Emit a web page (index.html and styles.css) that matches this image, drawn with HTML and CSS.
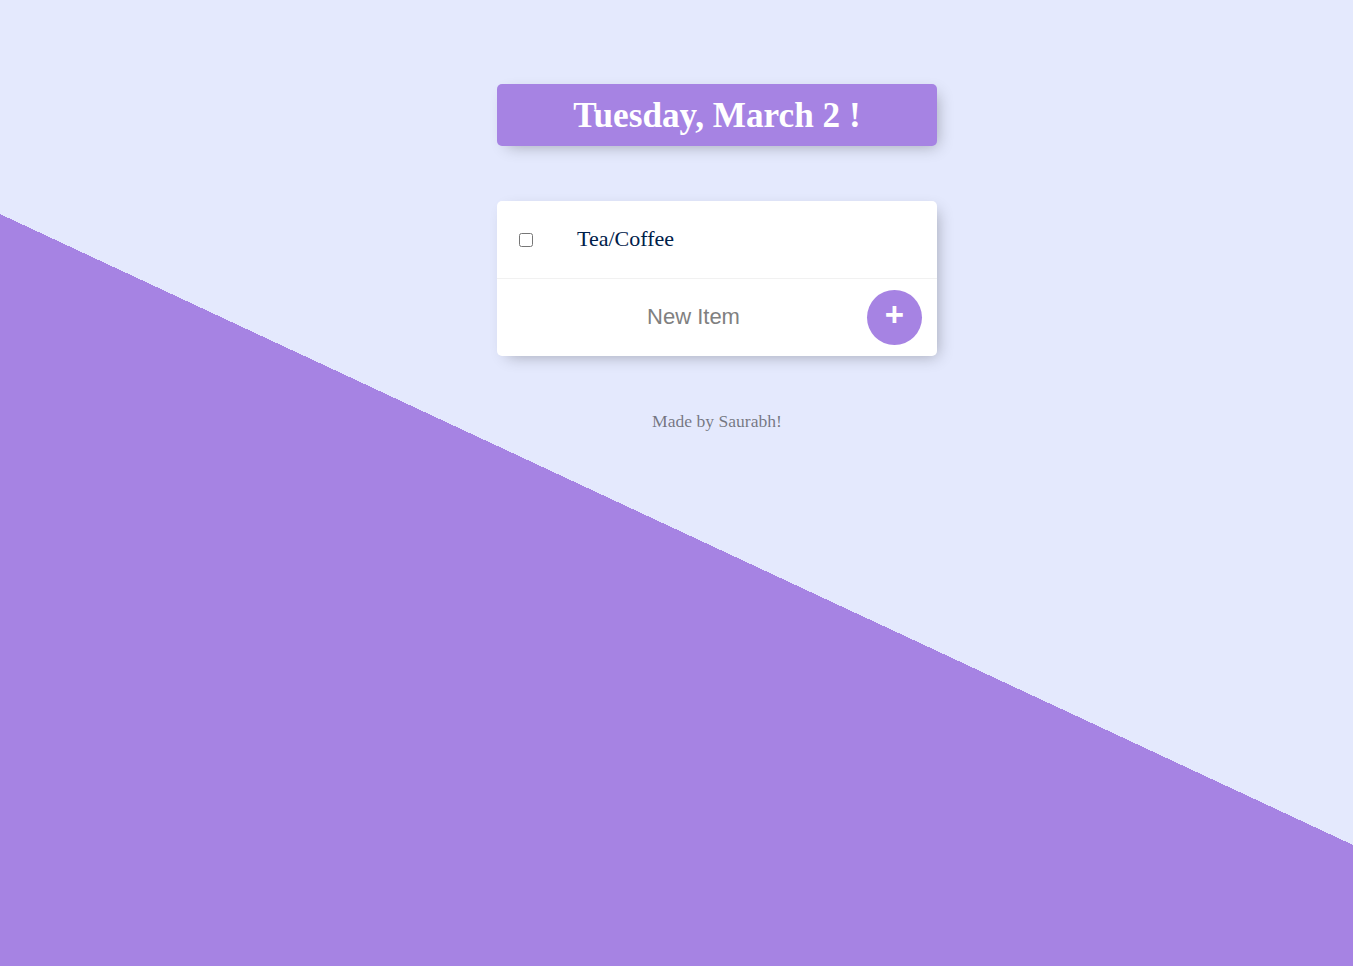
FILE: index.html
```html
<!DOCTYPE html>
<html lang="en">
<head>
<meta charset="utf-8">
<title>To-Do List</title>
<link rel="stylesheet" href="styles.css">
</head>
<body>
<div class="page">
  <div class="heading"><h1>Tuesday, March 2 !</h1></div>
  <div class="list">
    <div class="item">
      <input type="checkbox" class="check">
      <p class="item-text">Tea/Coffee</p>
    </div>
    <form class="item add-row">
      <input type="text" class="new-item" placeholder="New Item" autocomplete="off">
      <button type="button" class="add-btn">+</button>
    </form>
  </div>
  <footer class="footer">Made by Saurabh!</footer>
</div>
</body>
</html>
```
FILE: styles.css
```css
html {
  height: 100%;
  background-color: #E4E9FD;
  background-image: linear-gradient(25deg, #A683E3 50%, #E4E9FD 50%);
  background-size: 100% 1059px;
  background-repeat: no-repeat;
}
body {
  margin: 0;
  height: 100%;
  overflow: hidden;
}
.page {
  padding: 84px 0 0 81px;
  display: flex;
  flex-direction: column;
  align-items: center;
}
.heading {
  width: 440px;
  height: 62px;
  background: #A683E3;
  border-radius: 5px;
  box-shadow: 5px 5px 15px -5px rgba(0, 0, 0, 0.3);
  display: flex;
  align-items: center;
  justify-content: center;
}
.heading h1 {
  margin: 0;
  color: #fff;
  font-family: "Liberation Serif", "Times New Roman", serif;
  font-size: 35.2px;
  font-weight: bold;
  line-height: 1;
  padding-top: 1px;
}
.list {
  margin-top: 55px;
  width: 440px;
  background: #fff;
  border-radius: 5px;
  box-shadow: 5px 5px 15px -5px rgba(0, 0, 0, 0.3);
}
.item {
  height: 78px;
  display: flex;
  align-items: center;
  border-bottom: 1px solid #F1F1F1;
  box-sizing: border-box;
}
.add-row {
  height: 77px;
  border-bottom: 0;
  margin: 0;
}
.check {
  margin: 0 0 0 22px;
  width: 14px;
  height: 14px;
}
.item-text {
  margin: 0 0 0 44px;
  font-family: "Liberation Serif", "Times New Roman", serif;
  font-size: 22px;
  color: #00204a;
  padding-bottom: 1px;
}
.new-item {
  margin-left: 40px;
  width: 313px;
  height: 60px;
  border: none;
  padding: 0 0 2px 0;
  text-align: center;
  font-family: "Liberation Sans", Arial, sans-serif;
  font-size: 22px;
  color: #333;
  background: transparent;
  outline: none;
}
.new-item::placeholder {
  color: grey;
  opacity: 1;
}
.add-btn {
  margin-left: 17px;
  width: 55px;
  height: 55px;
  border-radius: 50%;
  border: 0;
  background: #A683E3;
  color: #fff;
  font-family: "Liberation Sans", Arial, sans-serif;
  font-size: 33px;
  font-weight: bold;
  line-height: 1;
  padding: 0 0 6px 0;
  display: flex;
  align-items: center;
  justify-content: center;
}
.footer {
  margin-top: 55px;
  font-family: "Liberation Serif", "Times New Roman", serif;
  font-size: 17.6px;
  color: rgba(0, 0, 0, 0.5);
  text-align: center;
}
```
